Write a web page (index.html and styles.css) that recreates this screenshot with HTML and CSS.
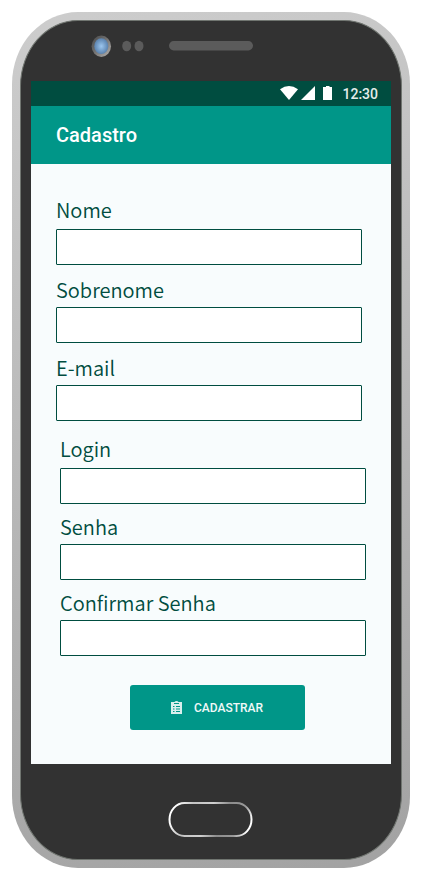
FILE: index.html
```html
<!DOCTYPE html>
<html lang="pt-BR">
<head>
<meta charset="utf-8">
<meta name="viewport" content="width=device-width, initial-scale=1">
<title>Cadastro</title>
<link rel="stylesheet" href="styles.css">
</head>
<body>
<div class="phone">
  <div class="face">
    <svg class="sensors" width="164" height="60" viewBox="90 21 164 60" aria-hidden="true">
      <defs>
        <radialGradient id="lens"><stop offset="0" stop-color="#9cc6ee"/><stop offset="1" stop-color="#5a82ae"/></radialGradient>
        <linearGradient id="rim" x1="0" y1="0" x2="1" y2="1"><stop offset="0" stop-color="#484848"/><stop offset=".4" stop-color="#6a6a6a"/><stop offset="1" stop-color="#b8b4b0"/></linearGradient>
      </defs>
      <ellipse cx="101.300" cy="46.200" rx="9.700" ry="10.700" fill="url(#rim)"/>
      <ellipse cx="101.300" cy="46.200" rx="7" ry="7.900" fill="url(#lens)"/>
      <ellipse cx="126.700" cy="46" rx="4.500" ry="5.200" fill="#5b5b5b"/>
      <ellipse cx="139" cy="46" rx="4.500" ry="5.200" fill="#5b5b5b"/>
      <rect x="169" y="41" width="84" height="9.500" rx="4.700" fill="#5b5b5b"/>
    </svg>
    <main class="screen">
      <div class="status">
        <svg width="53" height="16" viewBox="280 86 53 16" fill="#fff" aria-hidden="true">
          <path d="M280 89.300Q289 82.800 298 89.300L289 100Z"/>
          <path d="M315 86V100H301Z"/>
          <path d="M323 87h3v-1h3.500v1h2.500v13h-9z"/>
        </svg>
        <span>12:30</span>
      </div>
      <header class="appbar"><h1>Cadastro</h1></header>
      <form class="form">
        <div class="group personal">
          <div class="field"><label for="nome">Nome</label><input id="nome" type="text"></div>
          <div class="field"><label for="sobrenome">Sobrenome</label><input id="sobrenome" type="text"></div>
          <div class="field"><label for="email">E-mail</label><input id="email" type="email"></div>
        </div>
        <div class="group access">
          <div class="field"><label for="login">Login</label><input id="login" type="text"></div>
          <div class="field"><label for="senha">Senha</label><input id="senha" type="password"></div>
          <div class="field"><label for="confirmar">Confirmar Senha</label><input id="confirmar" type="password"></div>
        </div>
        <div class="actions">
          <button type="submit">
            <svg width="11" height="13" viewBox="0 0 11 13" aria-hidden="true">
              <path fill="#d9efed" d="M0 1h3.500Q4 0 5.500 0T7.500 1H11V13H0z"/>
              <path fill="none" stroke="#009688" d="M3 2.500h5M2 5.500h1.500M5 5.500h4M2 8h1.500M5 8h4M2 10.500h1.500M5 10.500h4"/>
            </svg>
            CADASTRAR
          </button>
        </div>
      </form>
    </main>
    <svg class="home" width="86" height="37" viewBox="0 0 86 37" aria-hidden="true">
      <defs>
        <linearGradient id="ring" gradientUnits="userSpaceOnUse" x1="8" y1="4" x2="78" y2="33">
          <stop offset="0" stop-color="#fff"/><stop offset=".2" stop-color="#c4c4c4"/><stop offset=".45" stop-color="#d0d0d0"/><stop offset=".65" stop-color="#8c8c8c"/><stop offset=".86" stop-color="#999"/><stop offset="1" stop-color="#fff"/>
        </linearGradient>
      </defs>
      <rect x="1.500" y="2" width="82" height="33" rx="15" ry="16.500" fill="none" stroke="url(#ring)" stroke-width="2"/>
    </svg>
  </div>
</div>
</body>
</html>
```
FILE: styles.css
```css
* { box-sizing: border-box; }

body {
  margin: 12px 18px 17px 12px;
  background: #fff;
  font-family: Roboto, sans-serif;
}

.phone {
  padding: 8px;
  border-radius: 66px / 72px;
  background: linear-gradient(165deg, #cdcdcd, #a2a2a2);
}

.face {
  display: flex;
  flex-direction: column;
  padding: 0 10px 21px;
  border: 1px solid #707570;
  border-radius: 58px / 66px;
  background: #323232;
}

.sensors { margin-left: 59px; }

.screen { background: #f8fcfd; }

.status {
  display: flex;
  align-items: center;
  justify-content: flex-end;
  gap: 9px;
  height: 25px;
  padding-right: 13px;
  background: #004d40;
  color: #e4ecea;
  font-size: 14px;
  font-weight: 500;
}

.appbar {
  display: flex;
  align-items: center;
  height: 58px;
  padding: 0 25px;
  background: #009688;
  color: #fff;
}

h1 {
  margin: 0;
  font-size: 20px;
  font-weight: 500;
}

.form { padding: 31px 0 34px; }

.group {
  display: flex;
  flex-direction: column;
}

.personal {
  gap: 10px;
  margin: 0 29px 13px 25px;
}

.access {
  gap: 8px;
  margin: 0 25px 29px 29px;
}

.field {
  display: flex;
  flex-direction: column;
  gap: 2px;
}

.field:first-child { gap: 4px; }

label {
  color: #004d40;
  font-family: "Noto Sans CJK SC", sans-serif;
  font-size: 20px;
  font-weight: 350;
  line-height: 30px;
}

input {
  width: 100%;
  height: 36px;
  padding: 0 8px;
  border: 1px solid #004d40;
  border-radius: 1px;
  background: #fff;
  font-size: 16px;
}

.actions {
  display: flex;
  justify-content: center;
  padding-left: 12px;
}

button {
  display: flex;
  align-items: center;
  justify-content: center;
  gap: 12px;
  width: 175px;
  height: 45px;
  padding: 0;
  border: 0;
  border-radius: 3px;
  background: #009688;
  color: #f0f9f8;
  font: 500 12px Roboto, sans-serif;
}

.home {
  align-self: center;
  margin-top: 37px;
}
```
